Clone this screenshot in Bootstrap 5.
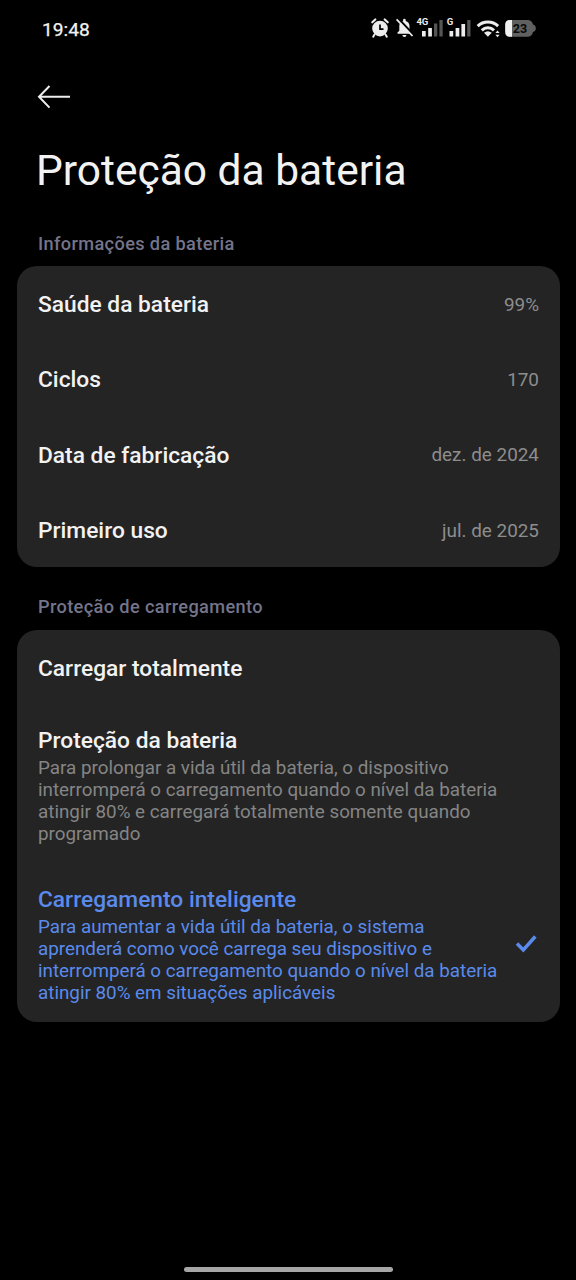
<!DOCTYPE html>
<html lang="pt-BR">
<head>
<meta charset="utf-8">
<meta name="viewport" content="width=device-width, initial-scale=1">
<title>Proteção da bateria</title>
<link rel="stylesheet" href="https://cdn.jsdelivr.net/npm/bootstrap@5.3.0/dist/css/bootstrap.min.css">
<style>
body{background:#000;color:#f2f2f2;font-family:Roboto,"Liberation Sans",sans-serif;overflow:hidden}
svg{display:block;flex:none}
.screen{height:1280px;width:576px}
.statusbar{height:56px;padding:0 40px 0 42px}
.clock{font-size:19.2px;line-height:24px;padding-top:4px;font-weight:400;-webkit-text-stroke:.25px}
.back{padding:0;margin:28px 0 0 37px;width:34px;height:26px;border:0}
.page-title{font-size:42.5px;line-height:50px;font-weight:400;margin:36px 0 0 36px}
.section-label{font-size:18.2px;line-height:22px;font-weight:500;letter-spacing:.36px;color:#74748a;margin:0 0 0 38px}
.panel{--bs-card-bg:#242424;--bs-card-border-width:0;--bs-card-border-radius:20px;color:#f2f2f2;margin:0 16px 0 17px}
.info-panel{padding-top:1px;height:301px}
.info-row{height:75.3px;padding:0 21px;flex:none}
.label-text{font-size:22.75px;line-height:26px;font-weight:500}
.info-row .label-text{padding-top:1px}
.value-text{font-size:18.9px;line-height:22px;color:#8d8d8d}
.option{padding:0 21px}
.option-desc{font-size:18.82px;line-height:22px;color:#858585;white-space:nowrap;margin:0}
.option.selected,.option.selected .option-desc{color:#5a8bec}
.home-bar{width:209px;height:5px;background:#a6a6a6}
</style>
</head>
<body>
<main class="screen d-flex flex-column">
  <header class="statusbar d-flex align-items-center justify-content-between">
    <span class="clock">19:48</span>
    <svg width="168" height="26" viewBox="368 15 168 26" role="img" aria-label="Status">
      <g fill="none" stroke="#ededed" stroke-linecap="round">
        <circle cx="380" cy="28.6" r="7.8" fill="#ededed" stroke="none"/>
        <path d="M372.3 22.3l3-2.8M387.7 22.3l-3-2.8" stroke-width="2.2"/>
        <path d="M374.5 34.5l-1.3 2.2M385.5 34.5l1.3 2.2" stroke-width="2"/>
        <path d="M380 24.4v4.8h3.5" stroke="#000" stroke-width="1.7" stroke-linecap="butt"/>
      </g>
      <path d="M397.5 33.8v-1.3l1.8-1.8v-4.8c0-2.5 1.5-4.5 3.8-5v-.8a1.3 1.3 0 0 1 2.6 0v.8c2.3.5 3.8 2.5 3.8 5v4.8l1.8 1.8v1.3zM402.4 35h4a2 2 0 0 1-4 0z" fill="#ededed"/>
      <path d="M398 18.2l16 17" stroke="#000" stroke-width="2.2"/>
      <path d="M396.6 19.3L412.5 36" stroke="#ededed" stroke-width="1.8"/>
      <g font-family="Roboto,sans-serif" font-weight="700" fill="#ededed">
        <text x="416.4" y="25.2" font-size="9.5" textLength="12" lengthAdjust="spacingAndGlyphs">4G</text>
        <text x="446.7" y="25.2" font-size="9.5">G</text>
      </g>
      <g fill="#ededed">
        <path d="M422 31h3.7v5.5H422zM428.2 28h3.7v8.5h-3.7zM449.5 31h3.7v5.5h-3.7zM455.6 28h3.7v8.5h-3.7zM461.4 24h3.7v12.5h-3.7z"/>
        <path d="M434 23.5h3.3v13H434zM439.4 20h3.3v16.5h-3.3zM467.2 20h3.3v16.5h-3.3z" fill="#555"/>
      </g>
      <g fill="none" stroke="#ededed" stroke-width="3">
        <path d="M477.7 26.1a14.8 14.8 0 0 1 20.4 0"/>
        <path d="M481.8 30.3a8.8 8.8 0 0 1 12.2 0"/>
      </g>
      <path d="M484 32.7q3.9-3 7.8 0l-3.9 4.1zM497.5 30.5l2.1 2.5h-4.2zM497.5 37.2l2.1-2.5h-4.2z" fill="#ededed"/>
      <path d="M510.2 20h17.3q4.5 0 5.5 4.5 2.8.7 2.8 3.8T533 32q-1 4.8-5.5 4.8h-17.3q-5 0-5-5V25q0-5 5-5z" fill="#606060"/>
      <path d="M512 20v16.8h-1.8q-5 0-5-5V25q0-5 5-5z" fill="#f0f0f0"/>
      <text x="520" y="32.8" text-anchor="middle" font-family="Roboto,sans-serif" font-weight="700" font-size="12.5" fill="#080808">23</text>
    </svg>
  </header>

  <button type="button" class="btn back" aria-label="Voltar">
    <svg width="34" height="26" viewBox="0 0 34 26" fill="none" stroke="#ededed" stroke-width="2"><path d="M12.5 2L2 12.8l10.5 10.8M2 12.8h31"/></svg>
  </button>
  <h1 class="page-title">Proteção da bateria</h1>

  <h2 class="section-label" style="margin-top:37px">Informações da bateria</h2>
  <section class="card panel info-panel" style="margin-top:11px">
    <div class="info-row d-flex align-items-center justify-content-between"><span class="label-text">Saúde da bateria</span><span class="value-text">99%</span></div>
    <div class="info-row d-flex align-items-center justify-content-between"><span class="label-text">Ciclos</span><span class="value-text">170</span></div>
    <div class="info-row d-flex align-items-center justify-content-between"><span class="label-text">Data de fabricação</span><span class="value-text">dez. de 2024</span></div>
    <div class="info-row d-flex align-items-center justify-content-between"><span class="label-text">Primeiro uso</span><span class="value-text">jul. de 2025</span></div>
  </section>

  <h2 class="section-label" style="margin-top:29px">Proteção de carregamento</h2>
  <section class="card panel" style="margin-top:12px">
    <div class="option d-flex align-items-center" style="height:77px"><span class="label-text">Carregar totalmente</span></div>
    <div class="option" style="height:158px;padding-top:21px">
      <div class="label-text">Proteção da bateria</div>
      <p class="option-desc" style="margin-top:3px">Para prolongar a vida útil da bateria, o dispositivo<br>interromperá o carregamento quando o nível da bateria<br>atingir 80% e carregará totalmente somente quando<br>programado</p>
    </div>
    <div class="option selected d-flex align-items-center justify-content-between" style="height:157px">
      <div class="pt-1">
        <div class="label-text">Carregamento inteligente</div>
        <p class="option-desc" style="margin-top:3px">Para aumentar a vida útil da bateria, o sistema<br>aprenderá como você carrega seu dispositivo e<br>interromperá o carregamento quando o nível da bateria<br>atingir 80% em situações aplicáveis</p>
      </div>
      <svg width="24" height="20" viewBox="0 0 24 20" fill="none" stroke="#5a8bec" stroke-width="3.4"><path d="M2 9.5l6.3 6.5L20.3 2.5"/></svg>
    </div>
  </section>

  <div class="home-bar rounded-pill mx-auto mt-auto mb-2"></div>
</main>
<script src="https://cdn.jsdelivr.net/npm/bootstrap@5.3.0/dist/js/bootstrap.bundle.min.js"></script>
</body>
</html>
